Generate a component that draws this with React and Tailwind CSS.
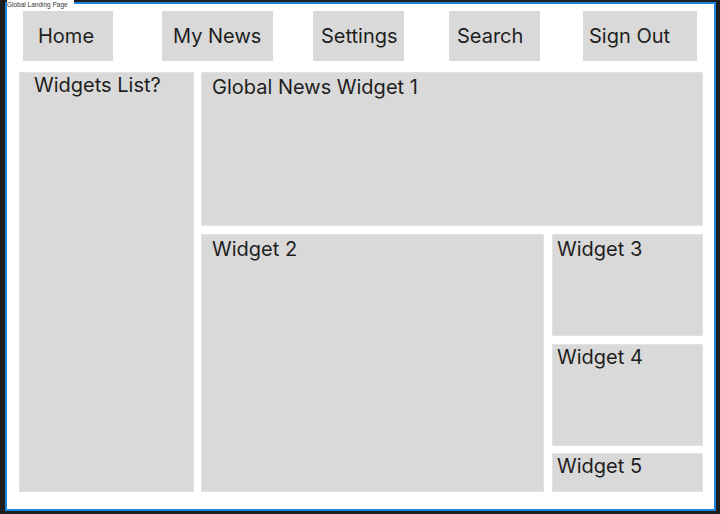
export default function App() {
  const nav = [
    { label: 'Home', w: 'w-[90px]', pl: 'pl-[15px]', ml: 'ml-[16px]' },
    { label: 'My News', w: 'w-[111px]', pl: 'pl-[11px]', ml: 'ml-[49px]' },
    { label: 'Settings', w: 'w-[91px]', pl: 'pl-[8px]', ml: 'ml-[40px]' },
    { label: 'Search', w: 'w-[91px]', pl: 'pl-[8px]', ml: 'ml-[45px]' },
    { label: 'Sign Out', w: 'w-[114px]', pl: 'pl-[6px]', ml: 'ml-[43px]' },
  ];

  const panel = 'bg-[#d9d9d9] border border-[#e2e2e2] text-[20px] leading-[24px] text-[#1e1e1e]';

  return (
    <div className="relative w-[720px] h-[514px] bg-[#1e1e1e] overflow-hidden font-['Inter',sans-serif]">
      <div className="ml-[5px] mt-[2px] w-[711px] h-[509px] border-2 border-[#1c84dc] bg-white">
        {/* top nav */}
        <div className="flex mt-[7px] h-[50px]">
          {nav.map((n) => (
            <div key={n.label} className={`${n.w} ${n.pl} ${n.ml} flex items-center bg-[#d9d9d9] text-[20px] text-[#1e1e1e]`}>
              {n.label}
            </div>
          ))}
        </div>

        {/* content */}
        <div className="flex mt-[11px] h-[420px] ml-[12px]">
          <div className={`${panel} w-[175px] pl-[14px] pt-0`}>Widgets List?</div>
          <div className="ml-[7px] w-[502px] flex flex-col">
            <div className={`${panel} h-[154px] pl-[10px] pt-[2px]`}>Global News Widget 1</div>
            <div className="flex mt-[8px] h-[258px]">
              <div className={`${panel} w-[343px] pl-[10px] pt-[2px]`}>Widget 2</div>
              <div className="ml-[8px] w-[151px] flex flex-col">
                <div className={`${panel} h-[102px] pl-[4px] pt-[2px]`}>Widget 3</div>
                <div className={`${panel} h-[102px] mt-[8px] pl-[4px] pt-0`}>Widget 4</div>
                <div className={`${panel} h-[39px] mt-[7px] pl-[4px] pt-0`}>Widget 5</div>
              </div>
            </div>
          </div>
        </div>
      </div>

      <div className="absolute top-0 left-[7px] h-[10px] pr-[6px] bg-white text-[6.5px] leading-[10px] text-[#333] font-['Liberation_Sans',sans-serif]">
        Global Landing Page
      </div>
    </div>
  );
}
